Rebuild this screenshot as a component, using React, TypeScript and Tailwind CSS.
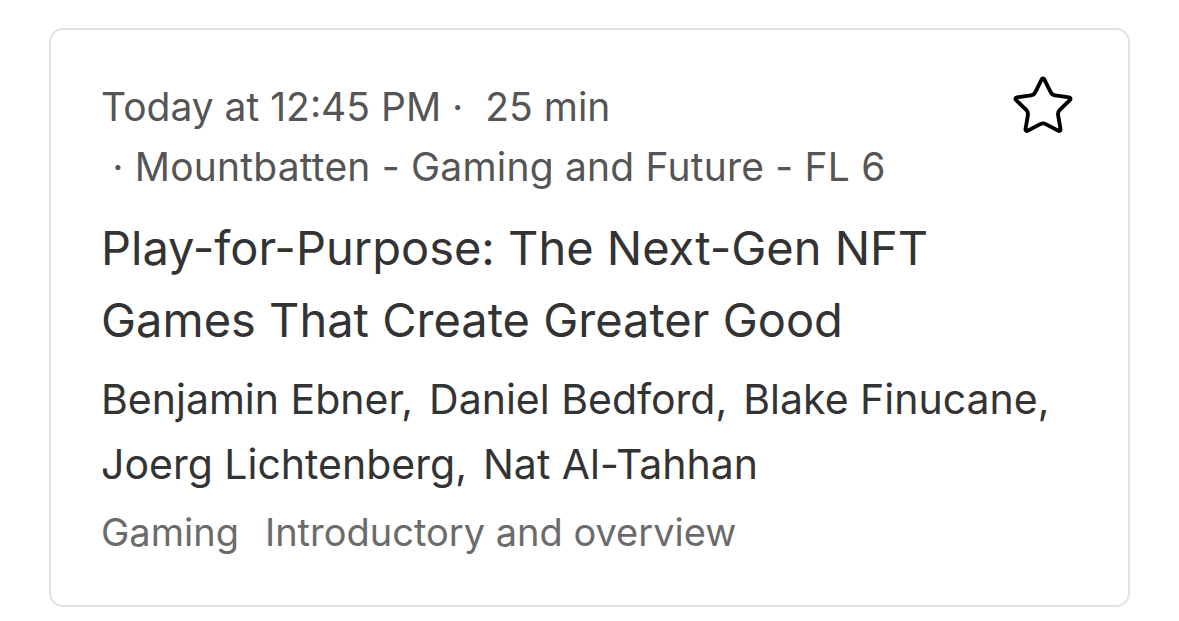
import React from 'react'

const speakers = [
  'Benjamin Ebner',
  'Daniel Bedford',
  'Blake Finucane',
  'Joerg Lichtenberg',
  'Nat Al-Tahhan',
]

function StarIcon() {
  return (
    <svg width="66" height="66" viewBox="0 0 24 24" fill="none" stroke="#000" strokeWidth="1.4" strokeLinejoin="round" strokeLinecap="round">
      <path d="M11.525 2.295a.53.53 0 0 1 .95 0l2.31 4.679a2.123 2.123 0 0 0 1.595 1.16l5.166.756a.53.53 0 0 1 .294.904l-3.736 3.638a2.123 2.123 0 0 0-.611 1.878l.882 5.14a.53.53 0 0 1-.771.56l-4.618-2.428a2.122 2.122 0 0 0-1.973 0L6.396 21.01a.53.53 0 0 1-.77-.56l.881-5.139a2.122 2.122 0 0 0-.611-1.879L2.16 9.795a.53.53 0 0 1 .294-.906l5.165-.755a2.122 2.122 0 0 0 1.597-1.16z" />
    </svg>
  )
}

export default function App() {
  return (
    <div className="w-[1179px] h-[621px] bg-white px-[49px] pt-[28px] pb-[14px]" style={{ fontFamily: 'Inter, "Noto Sans", sans-serif' }}>
      <div className="h-full rounded-[14px] border-2 border-[#e3e3e3] pl-[50px] pr-[52px] pt-[47px]">
        {/* meta + favourite */}
        <div className="flex items-start justify-between">
          <div className="text-[39px] leading-[60px] text-[#555555]">
            <div>Today at 12:45 PM ·&nbsp; 25 min</div>
            <div className="tracking-[0.2px]">&nbsp;· Mountbatten - Gaming and Future - FL 6</div>
          </div>
          <div className="-mt-[4px]">
            <StarIcon />
          </div>
        </div>
        <h2 className="mt-[15px] text-[47px] leading-[72px] text-[#333333]">
          Play-for-Purpose: The Next-Gen NFT
          <br />
          Games That Create Greater Good
        </h2>
        <div className="mt-[11px] flex flex-wrap gap-x-[16px] text-[41px] leading-[65px] text-[#333333]">
          {speakers.map((s, i) => (
            <span key={s}>
              {s}
              {i < speakers.length - 1 ? ',' : ''}
            </span>
          ))}
        </div>
        <div className="mt-[5px] flex gap-[26px] text-[38px] leading-[60px] text-[#6b6b6b]">
          <span>Gaming</span>
          <span>Introductory and overview</span>
        </div>
      </div>
    </div>
  )
}
